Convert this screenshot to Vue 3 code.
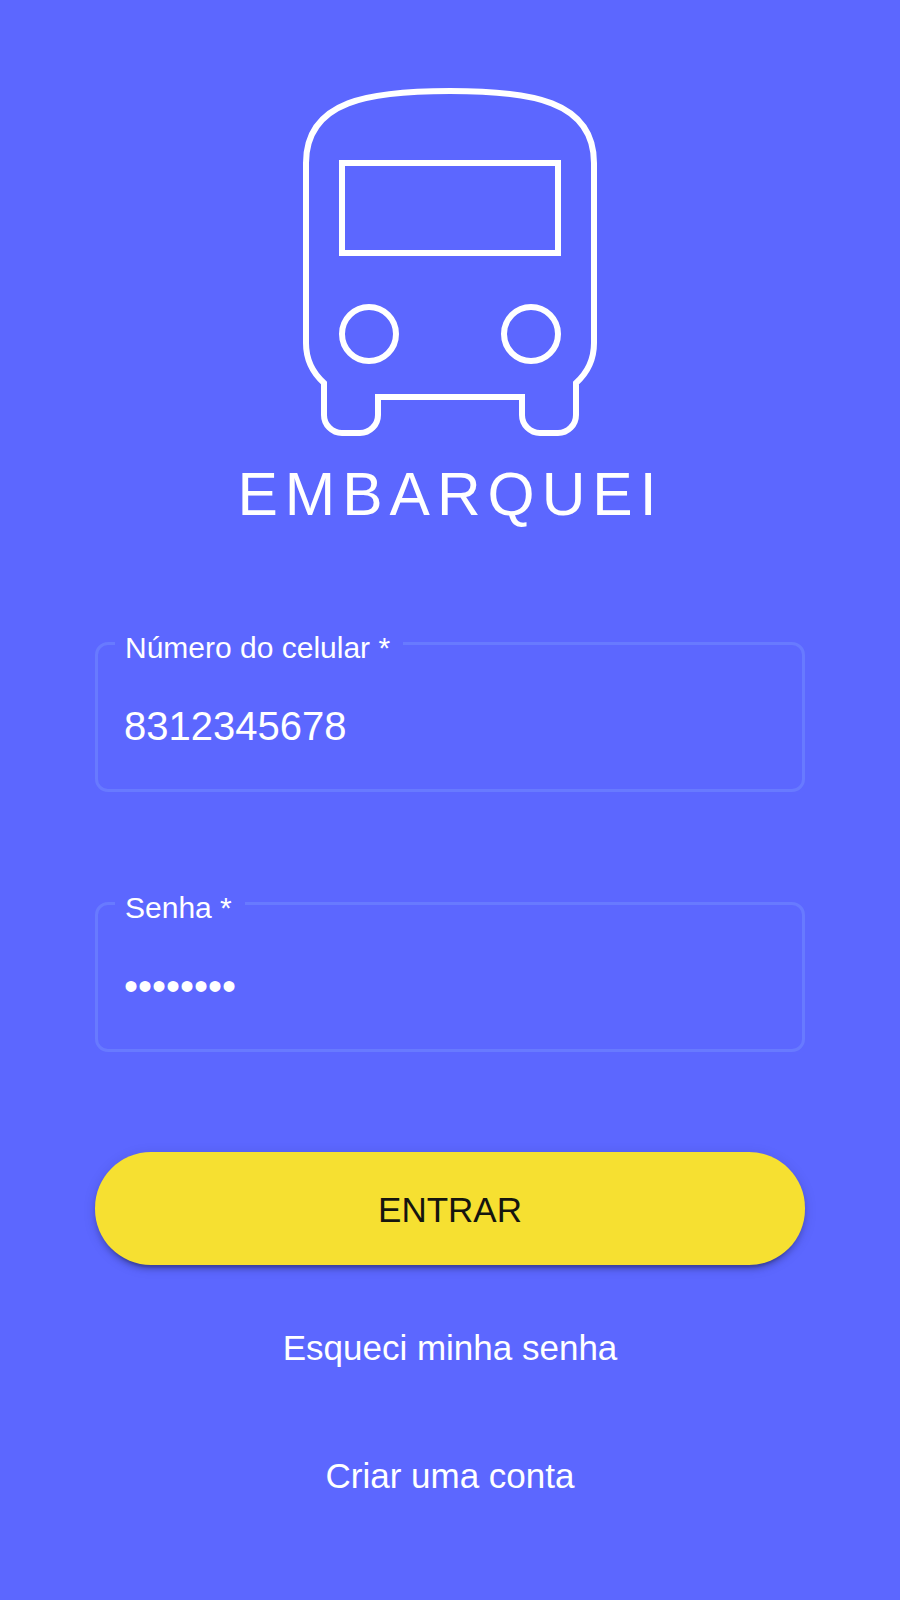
<script setup>
  /**
  * Login Screen Component
  *
  * Shows the Embarquei logo, the phone and password fields,
  * the sign in button and the secondary links.
  */

  import { ref } from 'vue';

  const phone = ref('8312345678');
  const password = ref('embarque');
</script>

<template>
  <main class="login-page">
    <!-- Logo -->
    <svg class="logo" viewBox="0 0 24 24" aria-hidden="true">
      <path d="M4 16c0 .88.39 1.67 1 2.22V20c0 .55.45 1 1 1h1c.55 0 1-.45 1-1v-1h8v1c0 .55.45 1 1 1h1c.55 0 1-.45 1-1v-1.78c.61-.55 1-1.34 1-2.22V6c0-3.5-3.58-4-8-4s-8 .5-8 4z" />
      <path d="M6 6h12v5H6z" />
      <circle cx="7.5" cy="15.5" r="1.5" />
      <circle cx="16.5" cy="15.5" r="1.5" />
    </svg>
    <h1 class="title">EMBARQUEI</h1>

    <!-- Login Form -->
    <form class="login-form" @submit.prevent>
      <div class="field">
        <label class="field-label" for="phone">Número do celular *</label>
        <input id="phone" v-model="phone" class="field-input" type="tel" />
      </div>

      <div class="field">
        <label class="field-label" for="password">Senha *</label>
        <input id="password" v-model="password" class="field-input" type="password" />
      </div>

      <button class="submit-button" type="submit">ENTRAR</button>
    </form>

    <!-- Links -->
    <nav class="links">
      <a class="link">Esqueci minha senha</a>
      <a class="link">Criar uma conta</a>
    </nav>
  </main>
</template>

<style>
  body {
    margin: 0;
    background: #5C67FF;
  }
</style>

<style scoped>
  .login-page {
    box-sizing: border-box;
    display: flex;
    flex-direction: column;
    align-items: center;
    width: 900px;
    height: 1600px;
    padding-top: 55px;
    overflow: hidden;
    background: #5C67FF;
    color: #FFFFFF;
    font-family: "Liberation Sans", Arial, sans-serif;
  }

  .logo {
    flex: none;
    width: 432px;
    height: 432px;
    margin-right: 1px;
    fill: none;
    stroke: #FFFFFF;
    stroke-width: 0.333;
  }

  .title {
    margin: -28px 0 0;
    height: 70px;
    padding-left: 1px;
    font-weight: 400;
    font-size: 60.5px;
    line-height: 70px;
    letter-spacing: 7px;
  }

  .login-form {
    display: flex;
    flex-direction: column;
    width: 710px;
    margin-top: 113px;
  }

  .field {
    position: relative;
    box-sizing: border-box;
    display: flex;
    height: 150px;
    margin-bottom: 110px;
    border: 3px solid #687AFF;
    border-radius: 13px;
  }

  .field-label {
    position: absolute;
    top: -15px;
    left: 17px;
    padding: 0 13px 0 10px;
    background: #5C67FF;
    font-size: 30px;
    line-height: 36px;
  }

  .field-input {
    flex: 1;
    padding: 18px 26px 0;
    border: 0;
    outline: 0;
    background: transparent;
    color: #FFFFFF;
    font-family: inherit;
    font-size: 40px;
  }

  .submit-button {
    height: 113px;
    margin-top: -10px;
    padding: 2px 0 0;
    border: 0;
    border-radius: 56px;
    background: #F6E031;
    box-shadow:
      0 7.5px 2.5px -5px rgba(0, 0, 0, 0.2),
      0 5px 5px rgba(0, 0, 0, 0.14),
      0 2.5px 12.5px rgba(0, 0, 0, 0.12);
    color: #15150F;
    font-family: inherit;
    font-size: 35px;
  }

  .links {
    display: flex;
    flex-direction: column;
    align-items: center;
    gap: 88px;
    margin-top: 63px;
  }

  .link {
    font-size: 35px;
    line-height: 40px;
  }
</style>
